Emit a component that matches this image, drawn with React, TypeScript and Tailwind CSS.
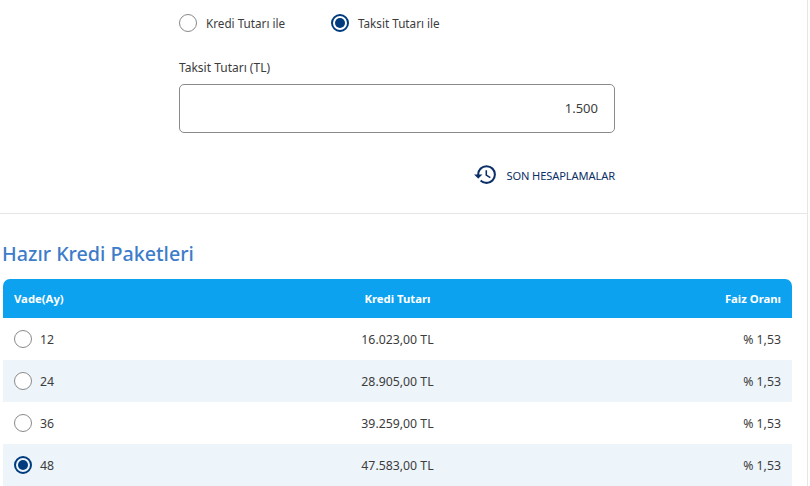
import { MdHistory } from "react-icons/md";

type Row = { term: string; amount: string; rate: string; selected?: boolean };

const rows: Row[] = [
  { term: "12", amount: "16.023,00 TL", rate: "% 1,53" },
  { term: "24", amount: "28.905,00 TL", rate: "% 1,53" },
  { term: "36", amount: "39.259,00 TL", rate: "% 1,53" },
  { term: "48", amount: "47.583,00 TL", rate: "% 1,53", selected: true },
];

function Radio({ checked }: { checked?: boolean }) {
  return checked ? (
    <span className="flex h-[18px] w-[18px] shrink-0 items-center justify-center rounded-full border-[2px] border-[#003b7d]">
      <span className="h-[10px] w-[10px] rounded-full bg-[#003b7d]" />
    </span>
  ) : (
    <span className="h-[18px] w-[18px] shrink-0 rounded-full border border-[#8a8a8a] bg-white" />
  );
}

export default function App() {
  return (
    <div className="h-[486px] w-[808px] overflow-hidden border-r border-[#e6e6e6] bg-white font-['Noto_Sans','Open_Sans',sans-serif] text-[#3c3c3c]">
      <div className="ml-[179px] w-[436px] pt-[14px]">
        <div className="flex h-[18px] items-center text-[11.7px]">
          <div className="flex w-[152px] items-center gap-[9px]">
            <Radio />
            <span className="pt-[2px]">Kredi Tutarı ile</span>
          </div>
          <div className="flex items-center gap-[9px]">
            <Radio checked />
            <span className="pt-[2px]">Taksit Tutarı ile</span>
          </div>
        </div>
        <div className="mt-[27px] h-[18px] text-[12px] leading-[18px]">Taksit Tutarı (TL)</div>
        <div className="mt-[7px] flex h-[49px] items-center justify-end rounded-[5px] border border-[#8a8a8a] pr-[16px] text-[13px]">
          1.500
        </div>
        <div className="mt-[29px] flex h-[24px] items-center justify-end text-[#0b2f66]">
          <MdHistory className="mr-[8px] text-[25px]" />
          <span className="pt-[4px] text-[11.1px] tracking-[-0.1px]">SON HESAPLAMALAR</span>
        </div>
      </div>
      <div className="mt-[27px] border-t border-[#e6e6e6]" />
      <h2 className="ml-[2px] mt-[26px] h-[28px] text-[19.7px] font-medium leading-[28px] text-[#3d7cc9]">
        Hazır Kredi Paketleri
      </h2>
      <div className="ml-[3px] mt-[11px] w-[789px] text-[12.3px]">
        <div className="grid h-[39px] grid-cols-3 items-center rounded-t-[7px] bg-[#0ca2f0] px-[11px] text-[11.3px] font-bold text-white">
          <span className="pt-[1px]">Vade(Ay)</span>
          <span className="pt-[1px] text-center">Kredi Tutarı</span>
          <span className="pt-[1px] text-right">Faiz Oranı</span>
        </div>
        {rows.map((row, i) => (
          <div
            key={row.term}
            className={
              i % 2 === 1
                ? "grid h-[42px] grid-cols-3 items-center bg-[#edf4fa] px-[11px]"
                : "grid h-[42px] grid-cols-3 items-center bg-white px-[11px]"
            }
          >
            <div className="flex items-center gap-[8px]">
              <Radio checked={row.selected} />
              <span className="pt-[2px]">{row.term}</span>
            </div>
            <span className="pt-[2px] text-center">{row.amount}</span>
            <span className="pt-[2px] text-right">{row.rate}</span>
          </div>
        ))}
      </div>
    </div>
  );
}
